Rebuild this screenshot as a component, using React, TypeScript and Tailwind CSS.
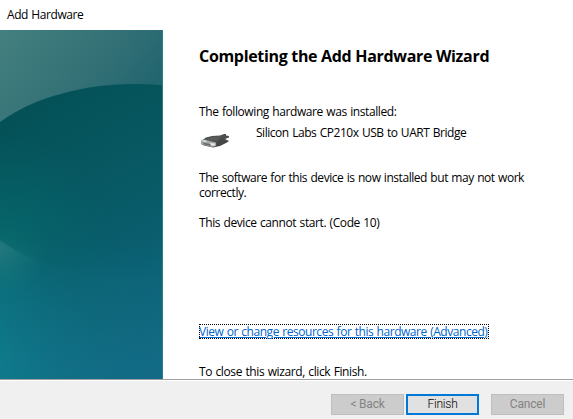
import React from "react";

function Artwork() {
  return (
    <svg className="block h-[349px] w-[163px] shrink-0" viewBox="0 0 163 349" aria-hidden="true">
      <defs>
        <linearGradient id="base" x1="0" y1="0" x2="163" y2="130" gradientUnits="userSpaceOnUse">
          <stop offset="0" stopColor="#44807f" />
          <stop offset="0.5" stopColor="#316f75" />
          <stop offset="1" stopColor="#135b69" />
        </linearGradient>
        <linearGradient id="low" x1="0" y1="349" x2="110" y2="210" gradientUnits="userSpaceOnUse">
          <stop offset="0" stopColor="#0b8990" />
          <stop offset="0.3" stopColor="#0c7482" />
          <stop offset="0.65" stopColor="#0a6471" />
          <stop offset="1" stopColor="#095f6f" />
        </linearGradient>
        <linearGradient id="blue" x1="85" y1="210" x2="163" y2="349" gradientUnits="userSpaceOnUse">
          <stop offset="0" stopColor="#136b87" stopOpacity="0" />
          <stop offset="1" stopColor="#136b87" />
        </linearGradient>
        <linearGradient id="disc" x1="30" y1="70" x2="150" y2="290" gradientUnits="userSpaceOnUse">
          <stop offset="0" stopColor="#045157" />
          <stop offset="0.5" stopColor="#085a65" />
          <stop offset="1" stopColor="#0d6278" />
        </linearGradient>
        <radialGradient id="green" cx="0" cy="215" r="110" gradientUnits="userSpaceOnUse">
          <stop offset="0" stopColor="#046d6b" stopOpacity="0.7" />
          <stop offset="1" stopColor="#04686a" stopOpacity="0" />
        </radialGradient>
        <linearGradient id="fade" x1="0" y1="150" x2="0" y2="248" gradientUnits="userSpaceOnUse">
          <stop offset="0" stopColor="white" />
          <stop offset="0.6" stopColor="#d0d0d0" />
          <stop offset="1" stopColor="black" />
        </linearGradient>
        <mask id="discMask" maskUnits="userSpaceOnUse" x="0" y="0" width="163" height="349">
          <rect width="163" height="349" fill="url(#fade)" />
        </mask>
        <radialGradient id="haze" cx="0" cy="218" r="48" gradientUnits="userSpaceOnUse">
          <stop offset="0" stopColor="#2c8080" stopOpacity="0.7" />
          <stop offset="1" stopColor="#167a7c" stopOpacity="0" />
        </radialGradient>
      </defs>
      <rect width="163" height="180" fill="url(#base)" />
      <rect y="150" width="163" height="199" fill="url(#low)" />
      <rect y="150" width="163" height="199" fill="url(#blue)" />
      <rect y="160" width="163" height="120" fill="url(#haze)" />
      <g mask="url(#discMask)">
        <ellipse cx="135" cy="151" rx="170" ry="97" fill="url(#disc)" />
        <ellipse cx="135" cy="151" rx="170" ry="97" fill="url(#green)" />
      </g>
      <rect x="162" width="1" height="349" fill="#28808b" />
    </svg>
  );
}

function ConnectorIcon() {
  return (
    <svg className="mt-2 ml-0.5 h-4 w-8 shrink-0" viewBox="0 0 32 16" aria-hidden="true">
      <path d="M0 8 L5 4.5 L11 3 L19 2.5 L23 1 L25 1 L25 2.5 L28 3 L28 4.5 L24 6 L28 8 L26 9.5 L19 13 L12 14.5 L3 12.5 L0 11Z" fill="#4c4e4e" />
      <path d="M3 6.5 L10 4.2 L20 3.2 L16 8Z" fill="#5a5c5c" />
      <path d="M0 7.5 L3 6.5 L15 9.5 L15 13 L11 14 L2 11.8 L0 10.5Z" fill="#a4a7a7" />
      <path d="M1 7.3 L5 7.5 L6 9 L2 8.6Z M9 10 L14 10.5 L14 12.5 L10 12.5Z" fill="#e6e8e8" />
      <path d="M2 9.5 L9 11 L10 13 L3 11.5Z" fill="#6a6e6e" />
      <path d="M16 9 L21 6 L27 8 L22 11 L16 13Z" fill="#454747" />
    </svg>
  );
}

export default function App() {
  return (
    <div className="flex h-[419px] w-[573px] flex-col overflow-hidden bg-white font-['Open_Sans','Noto_Sans',sans-serif] text-[12px] leading-[15px] text-black">
      <header className="h-[30px] pt-[7px] pl-[7px]">
        <span className="tracking-[-0.42px] [word-spacing:0.6px]">Add Hardware</span>
      </header>
      <main className="flex h-[349px]">
        <Artwork />
        <section className="flex flex-1 flex-col pl-9 whitespace-nowrap">
          <h1 className="h-[74px] pt-4 text-[16px] leading-5 font-bold tracking-[-0.32px]">Completing the Add Hardware Wizard</h1>
          <p className="h-[15px] tracking-[-0.41px] [word-spacing:0.7px]">The following hardware was installed:</p>
          <div className="flex h-[51px] pt-[6px]">
            <ConnectorIcon />
            <span className="ml-[23px] tracking-[-0.46px] [word-spacing:0.7px]">Silicon Labs CP210x USB to UART Bridge</span>
          </div>
          <div className="h-[45px] tracking-[-0.45px] [word-spacing:0.7px]">
            <p>The software for this device is now installed but may not work</p>
            <p>correctly.</p>
          </div>
          <p className="tracking-[-0.41px] [word-spacing:0.7px]">This device cannot start. (Code 10)</p>
          <a className="mt-[94px] h-[15px] w-[290px] border border-dotted border-black -indent-px leading-[14px] tracking-[-0.46px] text-[#0066cc] underline underline-offset-1 [word-spacing:0.7px]">View or change resources for this hardware (Advanced)</a>
          <p className="mt-[25px] tracking-[-0.39px] [word-spacing:0.7px]">To close this wizard, click Finish.</p>
        </section>
      </main>
      <footer className="flex h-10 border-t border-[#a0a0a0] bg-[#f0f0f0] pt-[14px] pl-[331px] font-[Roboto,'Liberation_Sans',sans-serif] shadow-[inset_0_1px_white]">
        <button className="h-[21px] w-[73px] border border-[#bfbfbf] bg-[#cccccc] tracking-[-0.2px] text-[#838383]">&lt; Back</button>
        <button className="ml-[2px] h-[21px] w-[73px] border-2 border-[#0078d7] bg-[#e1e1e1] leading-[15px] font-light tracking-[-0.2px]">Finish</button>
        <button className="ml-3 h-[21px] w-[73px] border border-[#bfbfbf] bg-[#cccccc] tracking-[-0.2px] text-[#838383]">Cancel</button>
      </footer>
    </div>
  );
}
